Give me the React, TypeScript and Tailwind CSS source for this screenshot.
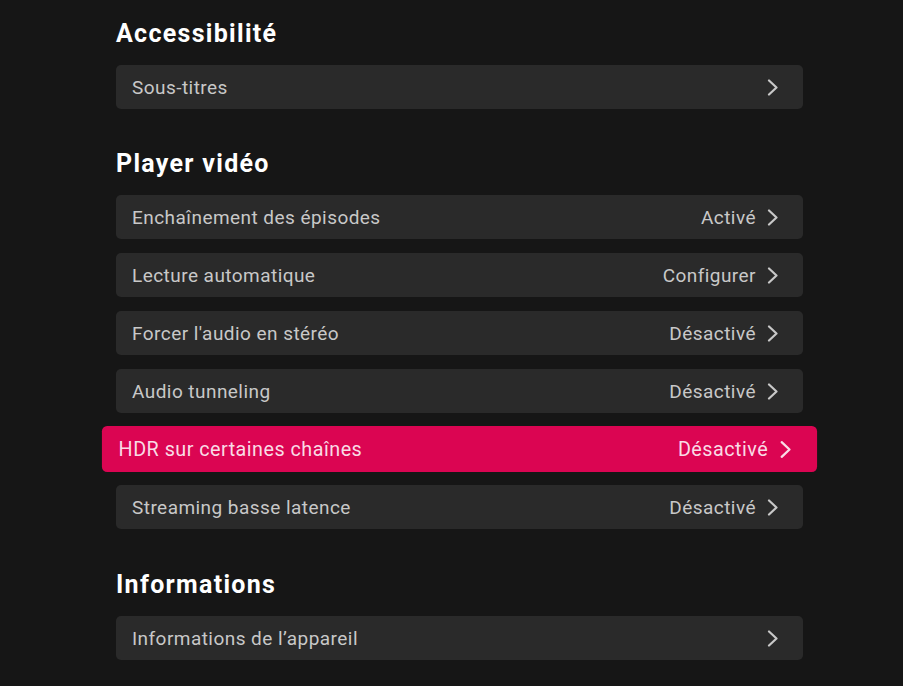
import React, { FC } from 'react';

interface IRow {
  label: string;
  value?: string;
  active?: boolean;
}

const Chevron: FC = () => (
  <svg width="12" height="17" viewBox="0 0 12 17" fill="none" className="shrink-0">
    <path d="M2 1.5 L9.5 8.5 L2 15.5" stroke="currentColor" strokeWidth="2.2" strokeLinecap="round" strokeLinejoin="round" />
  </svg>
);

const SettingsRow: FC<IRow> = ({ label, value, active }) => (
  <div
    className={
      active
        ? 'flex h-[44px] items-center justify-between rounded-[5px] bg-[#db0552] pl-4 pr-[24px] text-[#f9dbe5] scale-x-[1.041] scale-y-[1.045]'
        : 'flex h-[44px] items-center justify-between rounded-[5px] bg-[#2a2a2a] pl-4 pr-[24px] text-[#c8c8c8]'
    }
  >
    <span className="text-[19px] leading-none tracking-[0.45px]">{label}</span>
    <div className="flex items-center gap-[11px]">
      {value && <span className="text-[19px] leading-none tracking-[0.45px]">{value}</span>}
      <Chevron />
    </div>
  </div>
);

const SectionTitle: FC<{ title: string }> = ({ title }) => (
  <h2 className="h-[32px] text-[25px] font-bold leading-[34px] tracking-[1.3px] text-white">{title}</h2>
);

const player: IRow[] = [
  { label: 'Enchaînement des épisodes', value: 'Activé' },
  { label: 'Lecture automatique', value: 'Configurer' },
  { label: "Forcer l'audio en stéréo", value: 'Désactivé' },
  { label: 'Audio tunneling', value: 'Désactivé' },
  { label: 'HDR sur certaines chaînes', value: 'Désactivé', active: true },
  { label: 'Streaming basse latence', value: 'Désactivé' },
];

const App: FC = () => {
  return (
    <div className="min-h-[686px] w-full bg-[#161616] font-['Roboto',sans-serif]">
      <div className="ml-[116px] w-[687px] pt-[17px]">
        <SectionTitle title="Accessibilité" />
        <div className="mt-4">
          <SettingsRow label="Sous-titres" />
        </div>

        <div className="mt-[38px]">
          <SectionTitle title="Player vidéo" />
        </div>
        <div className="mt-4 flex flex-col gap-[14px]">
          {player.map((item) => (
            <SettingsRow key={item.label} {...item} />
          ))}
        </div>

        <div className="mt-[39px]">
          <SectionTitle title="Informations" />
        </div>
        <div className="mt-4">
          <SettingsRow label="Informations de l’appareil" />
        </div>
      </div>
    </div>
  );
};

export default App;
